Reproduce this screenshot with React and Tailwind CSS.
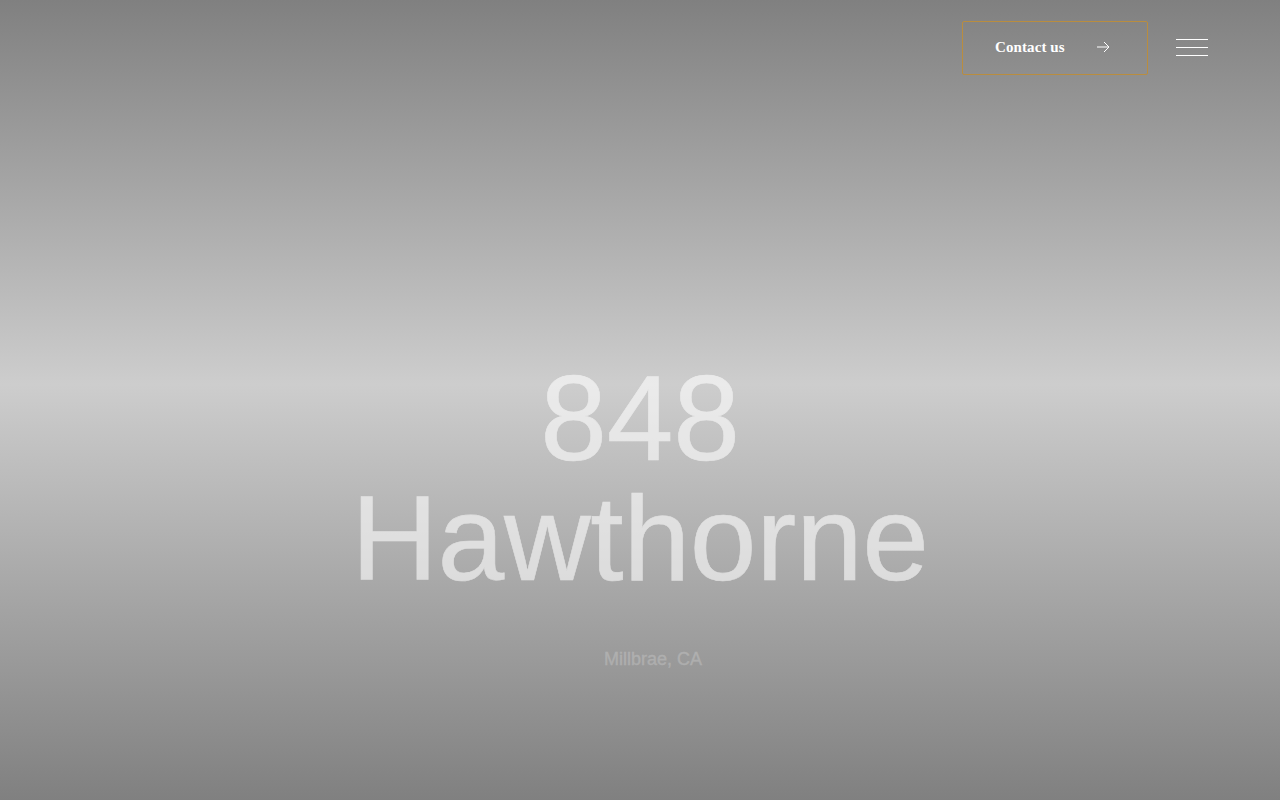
export default function App() {
  return (
    <div className="relative flex flex-col h-[800px] overflow-hidden bg-[linear-gradient(180deg,#808080_0%,#cdcdcd_48%,#808080_100%)]">
      <header className="flex justify-end items-center gap-7 pt-[21px] pr-[72px]">
        <a className="flex items-center w-[186px] h-[54px] pl-8 gap-[31px] border border-[#b98d3f] rounded-[2px] text-white font-['Liberation_Serif',serif] text-[15px] font-bold">
          <span className="-translate-y-px tracking-[0.1px]">Contact us</span>
          <svg className="-translate-y-px" width="14" height="12" viewBox="0 0 14 12" fill="none" stroke="#fff" strokeWidth="1"><path d="M1 6h12M8 1l5 5-5 5" /></svg>
        </a>
        <div className="flex flex-col gap-[7px] w-8 -translate-y-px">
          <span className="block h-px bg-white" />
          <span className="block h-px bg-white" />
          <span className="block h-px bg-white" />
        </div>
      </header>
      <main className="flex flex-col items-center pt-[283px] font-['Liberation_Sans',sans-serif]">
        <h1 className="text-center text-[120px] leading-[120px] font-normal text-white opacity-60 tracking-[-0.3px] [-webkit-text-stroke:0.6px_white]">848<br />Hawthorne</h1>
        <p className="mt-[47px] ml-[26px] text-lg text-white opacity-20 [-webkit-text-stroke:0.3px_white]">Millbrae, CA</p>
      </main>
    </div>
  );
}
